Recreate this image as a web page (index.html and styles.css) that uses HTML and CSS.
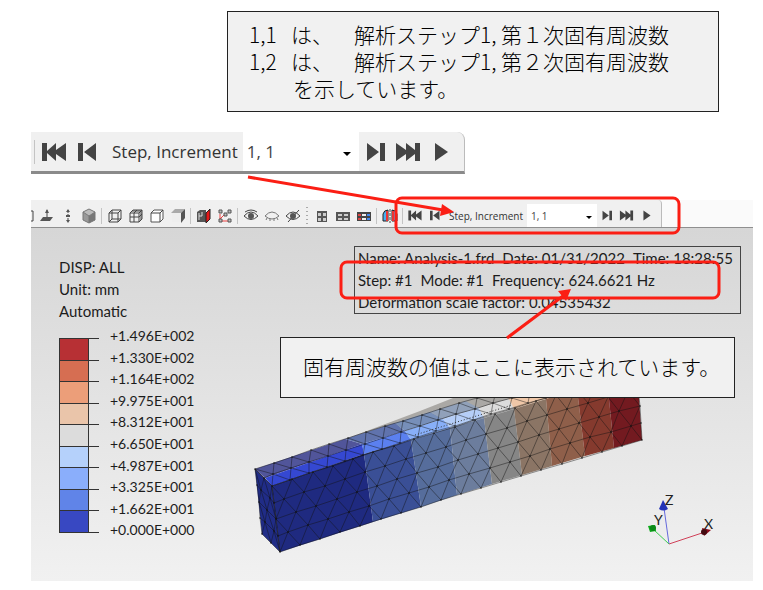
FILE: index.html
```html
<!DOCTYPE html>
<html lang="ja">
<head>
<meta charset="utf-8">
<title>固有周波数</title>
<link rel="stylesheet" href="styles.css">
</head>
<body>
<svg class="defs" aria-hidden="true">
  <symbol id="first" viewBox="0 0 26 20"><path d="M0 1h5v8L14 1v7l10-7v18l-10-7v7L5 11v8H0z"/></symbol>
  <symbol id="prev" viewBox="0 0 19 20"><path d="M0 1h5v18H0zM18 1v18L6 10z"/></symbol>
  <symbol id="next" viewBox="0 0 19 20"><path d="M1 1l12 9-12 9zM14 1h5v18h-5z"/></symbol>
  <symbol id="last" viewBox="0 0 26 20"><path d="M1 1l10 7V1l9 7V1h5v18h-5v-7l-9 7v-7L1 19z"/></symbol>
  <symbol id="play" viewBox="0 0 13 20"><path d="M0 1l13 9-13 9z"/></symbol>
</svg>
<main class="page">
  <section class="note">
    <p><span class="num">1,1</span>は、　解析ステップ<span class="num short">1,</span>第１次固有周波数</p>
    <p><span class="num">1,2</span>は、　解析ステップ<span class="num short">1,</span>第２次固有周波数</p>
    <p class="indent">を示しています。</p>
  </section>

  <div class="player large">
    <i class="sep"></i>
    <button aria-label="First"><svg class="wide"><use href="#first"/></svg></button>
    <button aria-label="Previous"><svg><use href="#prev"/></svg></button>
    <label for="step-large">Step, Increment</label>
    <span class="picker"><select id="step-large"><option>1, 1</option></select><svg class="caret" viewBox="0 0 8 4"><path d="M0 0h8L4 4z"/></svg></span>
    <button aria-label="Next"><svg><use href="#next"/></svg></button>
    <button aria-label="Last"><svg class="wide"><use href="#last"/></svg></button>
    <button aria-label="Play"><svg class="slim"><use href="#play"/></svg></button>
  </div>

  <section class="app">
    <div class="toolbar">
      <div class="tools">
        <button class="cut" aria-label="Plane"><svg viewBox="0 0 5 16"><path class="ln" d="M0 3h2v10H0"/></svg></button>
        <button aria-label="Normal"><svg viewBox="0 0 16 16"><path class="ln" d="M8 2v8"/><path d="M6 5l2-4 2 4z"/><path d="M4 9h10l-3 4H1z"/></svg></button>
        <button aria-label="Vertical"><svg viewBox="0 0 16 16"><path class="ln" d="M8 2v12" stroke-dasharray="3 1"/><path d="M6 4l2-3 2 3zM6 12l2 3 2-3zM6 7h4v2H6z"/></svg></button>
        <button aria-label="Isometric"><svg viewBox="0 0 16 16"><path fill="#bbb" d="M8 1l6 3-6 4-6-4z"/><path fill="#999" d="M2 4l6 4v7l-6-3z"/><path fill="#777" d="M14 4L8 8v7l6-3z"/><path class="th" d="M8 1l6 3v8l-6 3-6-3V4zM2 4l6 4 6-4M8 8v7"/></svg></button>
        <i class="sep"></i>
        <button aria-label="Wireframe"><svg viewBox="0 0 16 16"><path class="ln" d="M2 5h9v9H2zM5 2h9v9H5zM2 5l3-3M11 5l3-3M2 14l3-3M11 14l3-3"/></svg></button>
        <button aria-label="Element edges"><svg viewBox="0 0 16 16"><path class="ln" d="M2 5h9v9H2zM2 5l3-3h9v9l-3 3M11 5l3-3M6 5v9M2 9h9l3-3M6 5l3-3M4 3h9v9"/></svg></button>
        <button aria-label="Model edges"><svg viewBox="0 0 16 16"><path fill="#fff" stroke="#555" d="M2 5l3-3h9v9l-3 3H2z"/><path class="ln" d="M2 5h9v9M11 5l3-3"/></svg></button>
        <button aria-label="No edges"><svg viewBox="0 0 16 16"><path fill="#aaa" d="M1 5l4-4h10l-4 4z"/><path fill="#eee" d="M2 5h9v9H2z"/><path d="M11 5l4-4v9l-4 5z"/></svg></button>
        <i class="sep"></i>
        <button aria-label="Section"><svg viewBox="0 0 16 16"><path fill="#555" d="M1 4l3-2h6v12H1z"/><path stroke="#ddd" fill="none" d="M3 5v7M6 4v4H3"/><path fill="#e51919" stroke="#222" d="M10 5l4-4v10l-4 4z"/></svg></button>
        <button aria-label="Tree"><svg viewBox="0 0 16 16"><path fill="none" stroke="#f04040" d="M3 6v5l4-4M5 13h6"/><path fill="#bbb" stroke="#555" d="M2 2h3v3H2zM7 5h3v3H7zM11 2h3v3h-3zM2 11h3v3H2zM11 11h3v3h-3z"/></svg></button>
        <i class="sep"></i>
        <button aria-label="Hide"><svg viewBox="0 0 16 16"><path class="ln" d="M1 8q7-8 14 0-7 7-14 0M2 4q6-4 12 0"/><circle cx="8" cy="8" r="3"/></svg></button>
        <button aria-label="Show"><svg viewBox="0 0 16 16"><path class="th" d="M1 8q7-8 14 0-7 6-14 0M3 10l-1 2M6 11v2M10 11v2M13 10l1 2"/></svg></button>
        <button aria-label="Invert"><svg viewBox="0 0 16 16"><path class="ln" d="M1 8q7-8 14 0-7 7-14 0M14 2L3 14"/><circle cx="8" cy="8" r="3"/></svg></button>
        <i class="grip"></i>
        <button aria-label="Undeformed"><svg viewBox="0 0 16 16"><path fill="#555" d="M3 3h10v11H3z"/><path fill="#ccc" d="M4 5h3v3H4zM9 5h3v3H9zM4 10h3v3H4zM9 10h3v3H9z"/></svg></button>
        <button aria-label="Deformed"><svg viewBox="0 0 16 16"><path fill="#555" d="M1 4h14v9H1z"/><path fill="#ccc" d="M3 6h4v2H3zM9 6h4v2H9zM3 10h4v2H3zM9 10h4v2H9z"/></svg></button>
        <button aria-label="Contours"><svg viewBox="0 0 16 16"><path fill="#444" d="M1 4h14v9H1z"/><path fill="#d44" d="M2 6h3v2H2zM2 10h3v2H2z"/><path fill="#eee" d="M6 6h4v2H6zM6 10h4v2H6z"/><path fill="#48e" d="M11 6h3v2h-3zM11 10h3v2h-3z"/></svg></button>
        <i class="sep"></i>
        <button aria-label="Symmetry"><svg viewBox="0 0 16 16"><path fill="#4aaef0" stroke="#222" d="M1 13V6q1-4 5-4v11zM15 13V6q-1-4-5-4v11z"/><path fill="#e33" d="M4 3h2v10H4zM10 3h2v10h-2z"/><path class="ln" d="M8 1v14" stroke-dasharray="3 1"/></svg></button>
      </div>
      <div class="player">
        <i class="sep"></i>
        <button aria-label="First"><svg class="wide"><use href="#first"/></svg></button>
        <button aria-label="Previous"><svg><use href="#prev"/></svg></button>
        <label for="step">Step, Increment</label>
        <span class="picker"><select id="step"><option>1, 1</option></select><svg class="caret" viewBox="0 0 8 4"><path d="M0 0h8L4 4z"/></svg></span>
        <button aria-label="Next"><svg><use href="#next"/></svg></button>
        <button aria-label="Last"><svg class="wide"><use href="#last"/></svg></button>
        <button aria-label="Play"><svg class="slim"><use href="#play"/></svg></button>
      </div>
    </div>

    <div class="viewport">
      <div class="legend">
        <p>DISP: ALL</p><p>Unit: mm</p><p>Automatic</p>
        <div class="scale">
          <div class="bands">
            <i class="b1"></i><i class="b2"></i><i class="b3"></i><i class="b4"></i><i class="b5"></i><i class="b6"></i><i class="b7"></i><i class="b8"></i><i class="b9"></i>
          </div>
          <ol class="values">
            <li>+1.496E+002</li><li>+1.330E+002</li><li>+1.164E+002</li><li>+9.975E+001</li><li>+8.312E+001</li><li>+6.650E+001</li><li>+4.987E+001</li><li>+3.325E+001</li><li>+1.662E+001</li><li>+0.000E+000</li>
          </ol>
        </div>
      </div>
      <div class="info">
        <p><span>Name: Analysis-1.frd</span><span>Date: 01/31/2022</span><span>Time: 18:28:55</span></p>
        <p><span>Step: #1</span><span>Mode: #1</span><span>Frequency: 624.6621 Hz</span></p>
        <p>Deformation scale factor: 0.04535432</p>
      </div>
      <svg class="model" viewBox="240 370 513 210">
        <path fill="#aaa8a5" d="M340 440L420 410L453 397h60l-70 20z"/>
        <g id="faces"></g>
        <path id="mesh" class="mesh"/>
        <path id="nodes" class="nodes"/>
        <path class="dots" d="M415 434L512 404"/>
        <g class="axes">
          <path stroke="#d04058" d="M669 543l36-12"/><path stroke="#6468dc" d="M669 543l-5-36"/><path stroke="#3ccc50" d="M669 543l-15-14"/>
          <path fill="#8c0b1c" d="M702 527l9 2-7 6z"/><circle cx="704" cy="531" r="3" fill="#430a10"/>
          <path fill="#2334b8" d="M663 499l-4 9q4 3 9 0z"/>
          <path fill="#0fa91d" d="M648 525l7-1 1 6-6 1z"/><circle cx="653" cy="527" r="3" fill="#0b8a18"/>
          <text x="704" y="528">X</text><text x="665" y="504">Z</text><text x="654" y="524">Y</text>
        </g>
      </svg>
    </div>
  </section>

  <p class="note callout">固有周波数の値はここに表示されています。</p>
  <svg class="marks" viewBox="0 0 763 590" aria-hidden="true">
    <rect x="396" y="198" width="283" height="35" rx="6"/>
    <rect x="341" y="262" width="378" height="36" rx="6"/>
    <path d="M248 177L443 210M507 338L563 296"/>
    <path class="head" d="M454 212l-14 4 2-12zM571 289l-5 12-8-10z"/>
  </svg>
</main>
<script src="mesh.js"></script>
</body>
</html>
```
FILE: styles.css
```css
* { box-sizing: border-box; }
body { margin: 0; background: #fff; color: #111; }
p, ol { margin: 0; padding: 0; list-style: none; }
button { border: 0; padding: 0; background: none; display: flex; align-items: center; justify-content: center; }
.defs { position: absolute; width: 0; height: 0; }
.page { position: relative; padding: 11px 10px 10px 31px; }

.note { margin: 0 34px 0 196px; padding: 9px 21px; border: 1px solid #222; background: #f1f1f1; color: #000; font: 300 21px/27px "Noto Sans CJK JP", sans-serif; white-space: nowrap; text-spacing-trim: space-all; }
.num { display: inline-block; width: 42px; }
.short { width: 21px; }
.indent { padding-left: 44px; }
.callout { position: absolute; left: 280px; top: 337px; margin: 0; width: 455px; padding: 15px 22px 17px; }

.player { display: flex; align-items: stretch; background: #f0f0f0; color: #333; font: 10px "Open Sans", sans-serif; padding-right: 4px; border-radius: 0 4px 0 0; border-right: 1px solid #bbb; }
.player button { width: 20px; }
.player button svg { width: 10px; height: 11px; fill: #444; }
.player button svg.wide { width: 15px; }
.player button svg.slim { width: 8px; }
.player label { display: flex; align-items: center; padding: 0 4px; white-space: nowrap; }
.picker { position: relative; display: flex; width: 70px; background: #fff; }
.picker select { width: 100%; border: 0; padding: 0 4px; background: none; appearance: none; font: inherit; color: #444; }
.caret { position: absolute; right: 5px; top: 50%; width: 6px; height: 3px; fill: #000; pointer-events: none; }
.sep { width: 5px; flex: none; background: linear-gradient(#c4c4c4, #c4c4c4) center / 1px 16px no-repeat; }

.large { width: 434px; height: 42px; margin-top: 20px; border-bottom: 3px solid #8a8a8a; font-size: 17px; padding-right: 0; border-radius: 0 8px 0 0; }
.large .sep { width: 7px; background-size: 1px 24px; }
.large button { width: 33px; }
.large button svg { width: 19px; height: 20px; }
.large button svg.wide { width: 26px; }
.large button svg.slim { width: 13px; }
.large label { padding: 0 5px 0 8px; }
.large .picker { width: 116px; }
.large .caret { width: 8px; height: 4px; right: 8px; }

.app { margin-top: 26px; }
.toolbar { display: flex; height: 28px; background: #fafafa; border-bottom: 1px solid #8f8f8f; }
.toolbar .player { padding-top: 4px; }
.tools { display: flex; background: #f0f0f0; padding-top: 4px; }
.tools button { width: 21px; }
.tools button svg { width: 16px; height: 16px; fill: #555; }
.tools .cut { width: 5px; justify-content: flex-start; }
.tools .cut svg { width: 5px; }
.tools .grip { width: 8px; background: repeating-linear-gradient(#aaa 0 1px, #f0f0f0 1px 4px) center / 2px 18px no-repeat; }
.ln { fill: none; stroke: #444; }
.th { fill: none; stroke: #777; }

.viewport { position: relative; display: flex; justify-content: space-between; align-items: flex-start; height: 353px; padding: 18px 12px 0 28px; background: linear-gradient(#d6d6d6, #f1f1f1); color: #1c1c1c; font: 15px/22px Lato, sans-serif; white-space: nowrap; }
.legend { padding-top: 10px; }
.scale { display: flex; gap: 11px; }
.bands { display: grid; grid-template-rows: repeat(9, 1fr); width: 40px; height: 195px; margin-top: 16px; border-bottom: 1px solid #333; }
.bands i { border-top: 1px solid #333; background: linear-gradient(90deg, #333 1px, var(--band) 1px 29px, #333 29px 30px, transparent 30px); }
.b1 { --band: #b73034; } .b2 { --band: #d66e52; } .b3 { --band: #ec9e79; } .b4 { --band: #eac5aa; } .b5 { --band: #dcdcdc; } .b6 { --band: #b5d1fb; } .b7 { --band: #8aaefb; } .b8 { --band: #6084e8; } .b9 { --band: #3848c2; }
.values { display: grid; grid-template-rows: repeat(10, 1fr); height: 216px; margin-top: 4px; font-size: 14px; line-height: 20px; }
.info { width: 387px; height: 68px; border: 1px solid #444; padding: 0 3px; }
.info p { display: flex; gap: 8px; }
.model { position: absolute; left: 209px; bottom: 0; width: 513px; height: 210px; }
.mesh { fill: none; stroke: #111; stroke-opacity: .45; stroke-width: 1; }
.nodes { fill: none; stroke: #111; stroke-opacity: .5; stroke-width: 2; stroke-linecap: round; }
.dots { stroke: #333; stroke-dasharray: 1 2; }
.axes path { stroke-width: 1; }
.axes text { font: 14px Lato, sans-serif; fill: #222; }
.marks { position: absolute; left: 0; top: 0; width: 763px; height: 590px; fill: none; stroke: #fb1e14; stroke-width: 3; pointer-events: none; }
.marks .head { fill: #fb1e14; stroke: none; }
```
FILE: mesh.js
```js
const NS = "http://www.w3.org/2000/svg";
const faces = document.getElementById("faces");

function face(points, color) {
  const p = document.createElementNS(NS, "polygon");
  p.setAttribute("points", points.join(" "));
  p.setAttribute("fill", color);
  faces.append(p);
}

// Edges of the beam, sampled at each contour boundary: back, ridge, front, bottom.
const back = [[255, 468], [345, 438], [395, 422], [430, 411], [466, 400], [495, 391], [525, 382], [560, 371], [590, 362], [625, 354]];
const ridge = [[265, 477], [362, 443], [405, 430], [443, 418], [479, 407], [509, 398], [540, 388], [570, 379], [600, 370], [632, 361]];
const front = [[272, 485], [364, 453], [411, 439], [450, 427], [484, 417], [514, 408], [546, 398], [577, 388], [607, 379], [637, 370]];
const bottom = [[280, 551], [373, 521], [421, 506], [457, 494], [492, 483], [522, 474], [552, 465], [585, 455], [614, 447], [642, 439]];
const side = ["#1f2a80", "#3a4f96", "#566d9c", "#6c7d9d", "#868686", "#8b7565", "#8f5f4a", "#853a2e", "#731a20"];
const lit = ["#3548d2", "#5b80ef", "#88aff8", "#b5cef8", "#dcdcdc", "#efc7a8", "#ec9e79", "#d66e52", "#b73034"];
const upper = ["#51559a", "#6073ad", "#778fb9", "#91a1ba", "#aaa8a5", "#b59d8e", "#b08068", "#a06050", "#903030"];

face([[255, 468], [272, 485], [280, 551], [262, 533]], "#202c87");
side.forEach((c, i) => {
  face([back[i], back[i + 1], ridge[i + 1], ridge[i]], upper[i]);
  face([ridge[i], ridge[i + 1], front[i + 1], front[i]], lit[i]);
  face([front[i], front[i + 1], bottom[i + 1], bottom[i]], side[i]);
});

let lines = "";
let nodes = "";
// Staggered triangle grid over the quad a-b (upper edge) and d-c (lower edge),
// bowed upwards by `bow` pixels at mid-span.
function mesh(a, b, c, d, cols, rows, bow) {
  const mix = (p, q, t) => [p[0] + (q[0] - p[0]) * t, p[1] + (q[1] - p[1]) * t];
  const grid = [];
  for (let r = 0; r <= rows; r++) {
    const l = mix(a, d, r / rows), e = mix(b, c, r / rows), row = [];
    if (r % 2) row.push(0);
    for (let i = 0; i <= cols; i++) {
      const t = (i + (r % 2 ? 0.5 : 0)) / cols;
      if (t <= 1) row.push(t);
    }
    if (r % 2) row.push(1);
    const pts = row.map(t => {
      const [x, y] = mix(l, e, t);
      return [Math.round(x), Math.round(y - bow * 4 * t * (1 - t))];
    });
    grid.push(pts);
    lines += "M" + pts.join("L");
    pts.forEach(p => { nodes += "M" + p + "h0"; });
  }
  for (let r = 0; r < rows; r++) {
    const even = r % 2 ? grid[r + 1] : grid[r];
    const odd = r % 2 ? grid[r] : grid[r + 1];
    even.forEach((p, i) => {
      lines += "M" + odd[i] + "L" + p + "L" + odd[i + 1];
    });
  }
}
mesh([272, 485], [637, 370], [642, 439], [280, 551], 18, 4, 2);
mesh([255, 468], [625, 354], [637, 370], [272, 485], 20, 2, 3);
mesh([255, 468], [272, 485], [280, 551], [262, 533], 2, 4, 0);
document.getElementById("mesh").setAttribute("d", lines);
document.getElementById("nodes").setAttribute("d", nodes);
```
